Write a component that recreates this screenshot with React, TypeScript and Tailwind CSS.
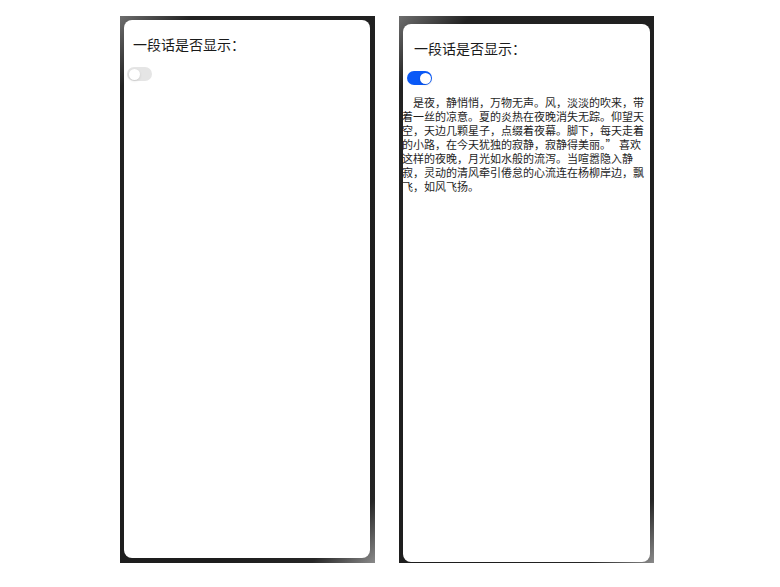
import React, { useState } from 'react';

const PARAGRAPH =
  '　是夜，静悄悄，万物无声。风，淡淡的吹来，带着一丝的凉意。夏的炎热在夜晚消失无踪。仰望天空，天边几颗星子，点缀着夜幕。脚下，每天走着的小路，在今天犹独的寂静，寂静得美丽。” 喜欢这样的夜晚，月光如水般的流泻。当喧嚣隐入静寂，灵动的清风牵引倦怠的心流连在杨柳岸边，飘飞，如风飞扬。';

const Toggle: React.FC<{ on: boolean; onChange: (v: boolean) => void }> = ({ on, onChange }) => (
  <button
    onClick={() => onChange(!on)}
    className={`relative w-[25px] h-[14px] rounded-full transition-colors ${
      on ? 'bg-[#0a59f7]' : 'bg-[#e5e5e5]'
    }`}
  >
    <span
      className={`absolute top-[1.5px] w-[11px] h-[11px] rounded-full bg-white shadow-sm transition-all ${
        on ? 'left-[12.5px]' : 'left-[1.5px]'
      }`}
    />
  </button>
);

const Phone: React.FC<{ initial: boolean; variant: 'a' | 'b' }> = ({ initial, variant }) => {
  const [show, setShow] = useState(initial);
  const frame =
    variant === 'a' ? 'pt-[4px] pl-[4px] pr-[5px] pb-[5px]' : 'pt-[8px] pl-[4px] pr-[4px] pb-[1px]';
  return (
    <div
      className={`w-[255px] h-[547px] flex bg-[linear-gradient(135deg,#6e6e6e_0%,#222_9%,#1d1d1d_80%,#262626_92%,#8a8a8a_100%)] ${frame}`}
    >
      <div className="flex-1 bg-white rounded-[8px] flex flex-col overflow-visible">
        <div
          className={`pt-[14px] text-[14px] leading-[20px] text-[#1a1a1a] ${
            variant === 'a' ? 'pl-[9px]' : 'pl-[11px]'
          }`}
        >
          一段话是否显示：
        </div>
        <div className={`mt-[13px] flex ${variant === 'a' ? 'pl-[3px]' : 'pl-[4px]'}`}>
          <Toggle on={show} onChange={setShow} />
        </div>
        {show && (
          <p className="mt-[10px] -ml-[1px] w-[246px] text-[11px] leading-[14px] text-[#1e1e1e] whitespace-pre-wrap">
            {PARAGRAPH}
          </p>
        )}
      </div>
    </div>
  );
};

export default function App() {
  return (
    <div
      className="w-[780px] h-[587px] bg-white flex gap-[24px] pl-[120px] pt-[16px]"
      style={{ fontFamily: '"Noto Sans CJK SC", "Noto Sans", sans-serif' }}
    >
      <Phone initial={false} variant="a" />
      <Phone initial={true} variant="b" />
    </div>
  );
}
